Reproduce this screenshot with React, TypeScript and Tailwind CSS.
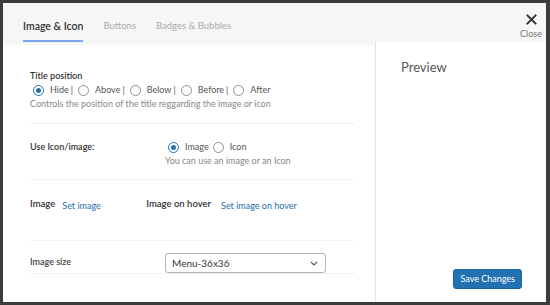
import React, { useState } from "react";

function Radio({ checked, label, onClick }: { checked: boolean; label: string; onClick: () => void }) {
  return (
    <label className="flex items-center cursor-pointer" onClick={onClick}>
      <span
        className={`flex items-center justify-center w-[11px] h-[11px] rounded-full border ${
          checked ? "border-[#2271b1]" : "border-[#8c8f94]"
        } bg-white`}
      >
        {checked && <span className="w-[5px] h-[5px] rounded-full bg-[#2271b1]" />}
      </span>
      <span className="ml-[6px]">{label}</span>
    </label>
  );
}

export default function App() {
  const [tab, setTab] = useState(0);
  const [pos, setPos] = useState("Hide");
  const [kind, setKind] = useState("Image");
  const tabs = ["Image & Icon", "Buttons", "Badges & Bubbles"];
  const positions = ["Hide", "Above", "Below", "Before", "After"];

  return (
    <div
      className="w-[550px] h-[305px] bg-[#3c3c3c] pl-[3px] pt-[3px] pr-[4px] pb-[3px] text-[#32373c]"
      style={{ fontFamily: 'Lato, "Open Sans", sans-serif' }}
    >
      <div className="h-full bg-white flex flex-col">
        {/* header */}
        <div className="h-[39px] bg-[#f6f6f6] flex items-end justify-between pl-[20px] pr-[4px] shrink-0">
          <div className="flex text-[10.5px] gap-[20px]">
            {tabs.map((t, i) => (
              <button
                key={t}
                onClick={() => setTab(i)}
                className={`pb-[7px] border-b-2 leading-[14px] ${
                  tab === i
                    ? "border-[#7aa7ee] text-[#333] font-semibold"
                    : "border-transparent text-[#aaa] text-[9.5px]"
                }`}
              >
                {t}
              </button>
            ))}
          </div>
          <button className="flex flex-col items-center self-center mt-[6px] text-[#777]">
            <svg width="11" height="11" viewBox="0 0 12 12" className="mb-[4px]">
              <path d="M1.5 1.5 L10.5 10.5 M10.5 1.5 L1.5 10.5" stroke="#333" strokeWidth="2.2" strokeLinecap="round" />
            </svg>
            <span className="text-[9px] leading-none">Close</span>
          </button>
        </div>

        {/* body */}
        <div className="flex flex-1 min-h-0">
          <div className="w-[372px] shrink-0 shadow-[inset_0_4px_4px_-3px_rgba(0,0,0,0.08)] pl-[27px] pr-[20px] text-[9px]">
            <div className="h-[82px] pt-[27px] border-b border-[#f0f0f0]">
              <div className="font-semibold text-[#333] leading-[14px]">Title position</div>
              <div className="flex items-center ml-[3px] leading-[14px] text-[#555]">
                {positions.map((p, i) => (
                  <React.Fragment key={p}>
                    <Radio checked={pos === p} label={p} onClick={() => setPos(p)} />
                    {i < positions.length - 1 && <span className="ml-[2px] mr-[5px]">|</span>}
                  </React.Fragment>
                ))}
              </div>
              <div className="text-[#888] leading-[14px]">
                Controls the position of the title reggarding the image or icon
              </div>
            </div>

            <div className="h-[56px] pt-[16px] border-b border-[#f4f4f4] flex">
              <div className="w-[135px] font-semibold text-[#333] leading-[14px]">Use Icon/image:</div>
              <div className="leading-[14px]">
                <div className="flex items-center gap-[4px] ml-[3px] text-[#555]">
                  <Radio checked={kind === "Image"} label="Image" onClick={() => setKind("Image")} />
                  <Radio checked={kind === "Icon"} label="Icon" onClick={() => setKind("Icon")} />
                </div>
                <div className="text-[#888]">You can use an image or an Icon</div>
              </div>
            </div>

            <div className="h-[61px] pt-[17px] border-b border-[#f4f4f4] flex items-start leading-[13px]">
              <span className="font-semibold text-[#333] text-[9.5px]">Image</span>
              <a className="text-[#2271b1] ml-[7px] mt-[2px] w-[84px]">Set image</a>
              <span className="font-semibold text-[#333] text-[9.5px]">Image on hover</span>
              <a className="text-[#2271b1] ml-[10px] mt-[2px]">Set image on hover</a>
            </div>

            <div className="h-[33px] border-b border-[#f0f0f0] flex items-start pt-[12px]">
              <div className="w-[135px] font-semibold text-[#444] mt-[2px]">Image size</div>
              <div className="w-[161px] h-[20px] border border-[#b5b5b5] rounded-[3px] flex items-center justify-between pl-[6px] pr-[7px] text-[#333] text-[10px]">
                <span>Menu-36x36</span>
                <svg width="8" height="5" viewBox="0 0 8 5">
                  <path d="M0.8 0.8 L4 4 L7.2 0.8" stroke="#555" strokeWidth="1.2" fill="none" />
                </svg>
              </div>
            </div>
          </div>

          <div className="flex-1 border-l border-[#e5e5e5] flex flex-col justify-between pl-[25px] pr-[24px] pt-[16px] pb-[13px]">
            <div className="text-[13px] text-[#555]">Preview</div>
            <div className="flex justify-end">
              <button className="bg-[#2271b1] text-white text-[9px] rounded-[3px] px-[6px] h-[20px] border border-[#1d65a0]">
                Save Changes
              </button>
            </div>
          </div>
        </div>
      </div>
    </div>
  );
}
